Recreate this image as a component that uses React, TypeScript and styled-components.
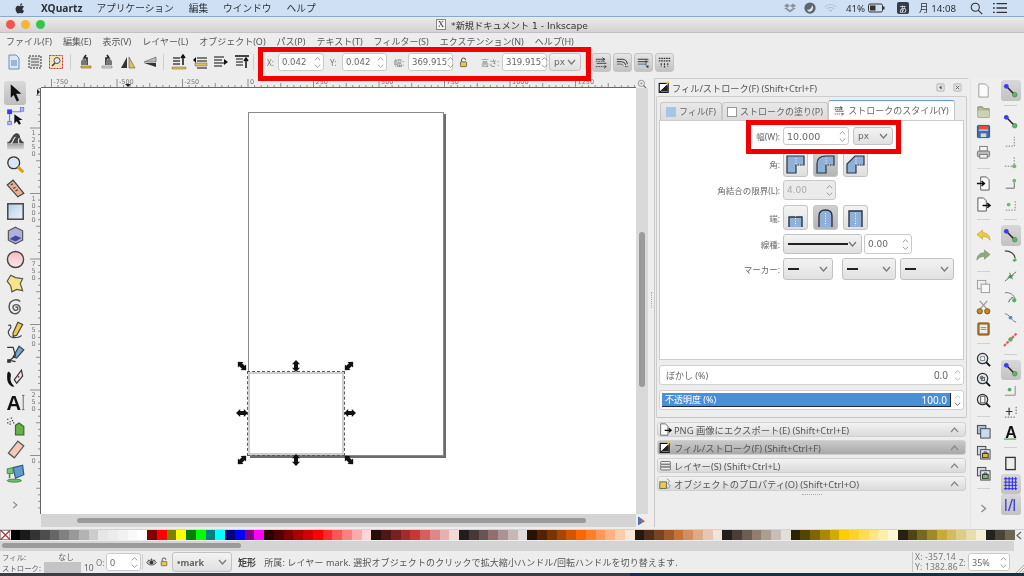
import React from "react";
import styled, { createGlobalStyle } from "styled-components";

const GlobalStyle = createGlobalStyle`
  html, body { margin: 0; padding: 0; background: #ededed; overflow: hidden; }
  * { box-sizing: border-box; }
`;

const sans = `"DejaVu Sans", "Noto Sans CJK JP", sans-serif`;
const cjk = `"Noto Sans", "Noto Sans CJK JP", sans-serif`;

/* ---------- icons ---------- */
const Ico = styled.svg<{ $s?: number }>`
  width: ${(p) => p.$s ?? 16}px;
  height: ${(p) => p.$s ?? 16}px;
  flex: none;
  display: block;
  overflow: visible;
`;

const glyphs: Record<string, React.ReactNode> = {
  newDoc: <path d="M3 1h7l3 3v11H3z" fill="#fbfbfb" stroke="#9a9a9a" />,
  newDocBlue: (
    <>
      <path d="M3 1h7l3 3v11H3z" fill="#dbe6f4" stroke="#6d8db5" />
      <path d="M5 7h6M5 9h6M5 11h6" stroke="#5c84b8" />
    </>
  ),
  selAll: (
    <>
      <rect x="2" y="2" width="12" height="12" fill="#ddd" stroke="#333" strokeDasharray="2 1" />
      <path d="M4 5h8M4 8h8M4 11h8" stroke="#555" />
    </>
  ),
  selTouch: (
    <>
      <rect x="1.5" y="1.5" width="13" height="13" fill="#f7e3b0" stroke="#c33" strokeDasharray="2 1" />
      <circle cx="9" cy="6.5" r="3" fill="#dce9f6" stroke="#555" />
      <path d="M4 12l3-3" stroke="#444" strokeWidth="1.6" />
    </>
  ),
  rotL: (
    <>
      <path d="M3 12h10v2H3z" fill="#e5b93a" stroke="#7b6320" strokeWidth=".6" />
      <path d="M9 11V4H6L8 1" fill="none" stroke="#222" strokeWidth="1.6" />
      <path d="M3 7l3-3 3 3v4H3z" fill="#777" />
    </>
  ),
  rotR: (
    <>
      <path d="M3 12h10v2H3z" fill="#d7dbe0" stroke="#777" strokeWidth=".6" />
      <path d="M7 11V4h3L8 1" fill="none" stroke="#222" strokeWidth="1.6" />
      <path d="M13 7l-3-3-3 3v4h6z" fill="#777" />
    </>
  ),
  flipH: (
    <>
      <path d="M7 3v11H1z" fill="#333" />
      <path d="M9 3v11h6z" fill="#e2bf5b" stroke="#555" strokeWidth=".6" />
    </>
  ),
  flipV: (
    <>
      <path d="M15 3v5H3z" fill="#b9b9b9" stroke="#555" strokeWidth=".6" />
      <path d="M15 13V9H3z" fill="#333" />
    </>
  ),
  top: (
    <>
      <path d="M1 13h14v2H1z" fill="#e2bf5b" stroke="#7b6320" strokeWidth=".5" />
      <path d="M2 10h7M2 7h7M2 4h7" stroke="#444" strokeWidth="1.4" />
      <path d="M12 11V2M10 4l2-3 2 3" fill="none" stroke="#111" strokeWidth="1.5" />
    </>
  ),
  raise: (
    <>
      <path d="M3 9h12v3H3z" fill="#e2bf5b" stroke="#7b6320" strokeWidth=".5" />
      <path d="M5 4h10M5 7h10M5 14h10" stroke="#555" strokeWidth="1.3" />
      <path d="M1 6l3-3v6z" fill="#111" />
    </>
  ),
  lower: (
    <>
      <path d="M1 3h10M1 6h8M1 9h10M1 12h8" stroke="#555" strokeWidth="1.3" />
      <path d="M15 8l-4-3v6z" fill="#111" />
    </>
  ),
  bottom: (
    <>
      <path d="M1 2h14" stroke="#333" strokeWidth="1.8" />
      <path d="M2 5h7M2 8h7M2 11h7" stroke="#555" strokeWidth="1.3" />
      <path d="M12 14V5M10 7l2-3 2 3" fill="none" stroke="#111" strokeWidth="1.5" />
    </>
  ),
  lock: (
    <>
      <path d="M5 7V4.5a3 3 0 016 0" fill="none" stroke="#444" strokeWidth="1.4" />
      <rect x="3.5" y="7" width="9" height="7" rx="1" fill="#e9c64f" stroke="#444" />
    </>
  ),
  eye: (
    <>
      <path d="M1 8c3-5 11-5 14 0-3 5-11 5-14 0z" fill="#bbb" stroke="#333" />
      <circle cx="8" cy="8" r="2.6" fill="#333" />
      <path d="M3 4l1 2M8 2v3M13 4l-1 2" stroke="#333" />
    </>
  ),
  strokeA: (
    <>
      <path d="M1 4h11M9 2l3 2-3 2" fill="none" stroke="#333" strokeWidth="1.1" />
      <path d="M2 9h12M11 12l3 1-3 2" fill="none" stroke="#333" strokeWidth="1.1" />
      <path d="M1 6.5h12M1 13h10" stroke="#333" strokeDasharray="2 1" />
    </>
  ),
  strokeB: (
    <>
      <path d="M1 4h7q5 0 6 6M1 7h6q4 0 5 4" fill="none" stroke="#333" strokeWidth="1.2" />
      <path d="M1 10h5q2 0 3 2" fill="none" stroke="#555" />
      <path d="M11 13h4" stroke="#333" strokeDasharray="2 1" />
    </>
  ),
  strokeC: (
    <>
      <path d="M1 4h13M1 7h13" stroke="#333" strokeWidth="1.2" />
      <path d="M1 10h9" stroke="#4c78a8" strokeWidth="1.3" />
      <path d="M11 13l3-2v4z" fill="#333" />
      <path d="M11 5v7" stroke="#333" />
    </>
  ),
  strokeD: (
    <>
      <path d="M1 3h14M1 6h14" stroke="#333" strokeWidth="1.4" strokeDasharray="2 1" />
      <path d="M4 9v4M8 9v5M12 9v4" stroke="#333" strokeWidth="1.4" strokeDasharray="2 1" />
    </>
  ),
  selector: <path d="M4 1l9 8H8.5l2.5 5.5-2 1-2.5-5.5L4 12.5z" fill="#111" />,
  node: (
    <>
      <path d="M3 4h10M3 4v9" stroke="#7d7df0" fill="none" />
      <rect x="1" y="2" width="4" height="4" fill="#3b3bf0" />
      <rect x="12" y="0.5" width="3" height="3" fill="#b7b7f5" stroke="#55f" strokeWidth=".5" />
      <rect x="1.5" y="12" width="3" height="3" fill="#b7b7f5" stroke="#55f" strokeWidth=".5" />
      <path d="M7 6l7 5h-3l1.5 3-1.5 1-2-3-2 2z" fill="#111" />
    </>
  ),
  tweak: (
    <>
      <defs>
        <linearGradient id="tweakBase" x1="0" y1="0" x2="0" y2="1">
          <stop offset="0" stopColor="#8c8c8c" />
          <stop offset="1" stopColor="#d8d8d8" />
        </linearGradient>
      </defs>
      <rect x="1" y="9" width="14" height="6.5" fill="url(#tweakBase)" />
      <path d="M1 10C4 9 5 3 8 2c3-1 4 2 4 4 1 2 2 3 3 4z" fill="#444" />
      <path d="M8 5c-2 1-2 5-4 6M11 6c-1 2-1 3 0 5" stroke="#ddd" fill="none" />
    </>
  ),
  zoom: (
    <>
      <circle cx="6.5" cy="6.5" r="5" fill="#d8e8f7" stroke="#333" strokeWidth="1.1" />
      <path d="M10 10l4.5 4.5" stroke="#e59a1c" strokeWidth="2.6" />
    </>
  ),
  measure: (
    <>
      <path d="M1 5l5-4 9 11-5 3z" fill="#e9b09a" stroke="#444" />
      <path d="M4 5l2-1M6 8l2-1M8 10l2-1" stroke="#444" />
    </>
  ),
  rect: (
    <>
      <defs>
        <linearGradient id="rectFill" x1="0" y1="0" x2="1" y2="1">
          <stop offset="0" stopColor="#b3cde6" />
          <stop offset="1" stopColor="#eef4fa" />
        </linearGradient>
      </defs>
      <rect x="1.5" y="1.5" width="13" height="13" fill="url(#rectFill)" stroke="#4a4a4a" strokeWidth="1.3" />
    </>
  ),
  box3d: (
    <>
      <path d="M8 1l6 3v8l-6 3-6-3V4z" fill="#aeb0de" stroke="#555" />
      <path d="M3 11l5-3 5 2-5 3z" fill="#46469a" />
    </>
  ),
  ellipse: (
    <>
      <defs>
        <linearGradient id="ellFill" x1="0" y1="0" x2="0" y2="1">
          <stop offset="0" stopColor="#fbb9c4" />
          <stop offset="1" stopColor="#fde6ea" />
        </linearGradient>
      </defs>
      <circle cx="8" cy="8" r="6.8" fill="url(#ellFill)" stroke="#444" strokeWidth="1.2" />
    </>
  ),
  star: <path d="M4 1l4 2 6 1-2 4 2 6-5-1-4 2-1-5-3-4z" fill="#f5e58a" stroke="#555" />,
  spiral: (
    <path
      d="M8 8c1-1 2 0 2 1s-2 2-3 1-2-3 0-4 5 0 5 3-3 5-6 4-4-5-3-8 6-5 9-2"
      fill="none"
      stroke="#555"
      strokeWidth="1.2"
    />
  ),
  pencil: (
    <>
      <path d="M10 1l4 2-5 9-3 1 0-3z" fill="#f3c94e" stroke="#444" />
      <path d="M2 4c2-2 3 1 1 3s-1 7 4 7 6-2 6-2" fill="none" stroke="#444" />
    </>
  ),
  pen: (
    <>
      <path d="M11 1l4 3-6 7-3-1z" fill="#72a7d6" stroke="#444" />
      <path d="M1 2h5l2 7-5 4 5 1" fill="none" stroke="#333" />
      <rect x="1" y="12" width="3" height="3" fill="#333" />
    </>
  ),
  callig: (
    <>
      <path d="M2 2c4 2 1 5 2 8s3 4 3 5c-3 0-6-3-6-7s0-5 1-6z" fill="#111" />
      <path d="M13 1l1 5-5 6-2-3z" fill="#e7e7f5" stroke="#333" />
      <path d="M10 6l1 1" stroke="#c33" strokeWidth="1.4" />
    </>
  ),
  text: (
    <>
      <text x="6.5" y="14" textAnchor="middle" fontFamily="Liberation Sans" fontWeight="700" fontSize="17" fill="#111">
        A
      </text>
      <path d="M14.5 2v12M13.5 2h2M13.5 14h2" stroke="#555" strokeWidth=".7" fill="none" />
    </>
  ),
  spray: (
    <>
      <path d="M8 7l3-2 4 3v7H8z" fill="#69b04c" stroke="#3d6a2b" />
      <path d="M1 2h1M3 4h1M1 5h1M4 1h1M5 3h1M3 6h1M6 5h1" stroke="#333" />
    </>
  ),
  eraser: <path d="M10 1l5 4-8 10-5-4z" fill="#f6c9bb" stroke="#555" />,
  bucket: (
    <>
      <path d="M6 3l8-2 1 8-7 3z" fill="#5f9bd0" stroke="#2f5a80" />
      <path d="M1 4l5-1v5H1z" fill="#79c27a" stroke="#2d6d33" strokeWidth=".6" />
      <path d="M3 8v4" stroke="#3d9c49" strokeWidth="1.4" />
      <ellipse cx="7" cy="14" rx="6" ry="1.3" fill="#74bb72" stroke="#2d6d33" strokeWidth=".6" />
    </>
  ),
  open: (
    <>
      <path d="M2 3h5l1 2h6v9H2z" fill="#b4b998" stroke="#888c70" />
      <path d="M2 7h12v7H2z" fill="#ccd0b4" />
    </>
  ),
  save: (
    <>
      <rect x="1.5" y="1.5" width="13" height="13" rx="1" fill="#3f6ba8" stroke="#2a4d80" />
      <rect x="3" y="2" width="10" height="4" fill="#e84a3b" />
      <rect x="3" y="6" width="10" height="1" fill="#fff" />
      <rect x="5" y="10" width="6" height="4" fill="#cfd6df" />
    </>
  ),
  print: (
    <>
      <rect x="4" y="1.5" width="8" height="5" fill="#f2f2f2" stroke="#777" />
      <rect x="1.5" y="6.5" width="13" height="6" rx="1" fill="#bcbcbc" stroke="#777" />
      <rect x="4" y="10" width="8" height="4" fill="#eee" stroke="#777" />
    </>
  ),
  importDoc: (
    <>
      <path d="M5 1h6l3 3v11H5z" fill="#fafafa" stroke="#555" />
      <path d="M1 8h7M6 5.5L9 8l-3 2.5" fill="none" stroke="#111" strokeWidth="1.5" />
    </>
  ),
  exportDoc: (
    <>
      <path d="M2 1h6l3 3v11H2z" fill="#fafafa" stroke="#555" />
      <path d="M7 9h7M12 6.5L15 9l-3 2.5" fill="none" stroke="#111" strokeWidth="1.5" />
    </>
  ),
  undo: <path d="M1 7l6-5v3c5 0 8 3 8 8-2-3-4-4-8-4v3z" fill="#eccc3f" stroke="#b99a1e" strokeWidth=".6" />,
  redo: <path d="M15 7L9 2v3c-5 0-8 3-8 8 2-3 4-4 8-4v3z" fill="#8ea97a" stroke="#728c60" strokeWidth=".6" />,
  copy: (
    <>
      <rect x="1.5" y="1.5" width="9" height="9" fill="#eee" stroke="#999" />
      <rect x="5.5" y="5.5" width="9" height="9" fill="#f6f6f6" stroke="#999" />
    </>
  ),
  cut: (
    <>
      <path d="M4 1l8 9M12 1L4 10" stroke="#999" strokeWidth="1.3" />
      <circle cx="4" cy="12" r="2.8" fill="#c98a2a" stroke="#7a5010" />
      <circle cx="12" cy="12" r="2.8" fill="#c98a2a" stroke="#7a5010" />
    </>
  ),
  paste: (
    <>
      <rect x="2" y="2" width="12" height="13" rx="1" fill="#b07c35" stroke="#7a5010" />
      <rect x="4" y="4" width="8" height="9" fill="#eee" />
      <path d="M5 7h6M5 9h6" stroke="#888" />
    </>
  ),
  zoomA: (
    <>
      <circle cx="7" cy="7" r="5.5" fill="#dbe7f2" stroke="#333" strokeWidth="1.3" />
      <path d="M11 11l4 4" stroke="#111" strokeWidth="2" />
      <rect x="5" y="5" width="4" height="4" fill="#fff" stroke="#888" />
    </>
  ),
  zoomB: (
    <>
      <circle cx="7" cy="7" r="5.5" fill="#dbe7f2" stroke="#333" strokeWidth="1.3" />
      <path d="M11 11l4 4" stroke="#111" strokeWidth="2" />
      <circle cx="6" cy="6" r="1.5" fill="#eecb4e" stroke="#555" />
      <rect x="6" y="6" width="3" height="3" fill="none" stroke="#555" />
    </>
  ),
  zoomC: (
    <>
      <circle cx="7" cy="7" r="5.5" fill="#dbe7f2" stroke="#333" strokeWidth="1.3" />
      <path d="M11 11l4 4" stroke="#111" strokeWidth="2" />
      <rect x="5" y="3.5" width="4.5" height="7" fill="#fff" stroke="#555" />
    </>
  ),
  dup: (
    <>
      <rect x="1.5" y="1.5" width="9" height="9" fill="#a9bfd7" stroke="#444" />
      <rect x="5" y="5" width="10" height="10" fill="#c9dbee" stroke="#444" />
    </>
  ),
  cloneLock: (
    <>
      <rect x="1.5" y="1.5" width="9" height="9" fill="#cfd6df" stroke="#444" />
      <rect x="5" y="5" width="10" height="10" fill="#e4e8ee" stroke="#444" />
      <rect x="7" y="9" width="6" height="4.5" fill="#e5b93a" stroke="#333" />
      <path d="M8.5 9V7.5h3V9" fill="none" stroke="#333" />
    </>
  ),
  cloneGreen: (
    <>
      <rect x="1.5" y="1.5" width="9" height="9" fill="#cfd6df" stroke="#444" />
      <rect x="5" y="5" width="10" height="10" fill="#e4e8ee" stroke="#444" />
      <rect x="7" y="9" width="6" height="4.5" fill="#7fbd57" stroke="#333" />
      <path d="M8.5 9V7.5h3V9" fill="none" stroke="#333" />
    </>
  ),
  snapMain: (
    <>
      <path d="M3 3l10 10" stroke="#222" strokeWidth="1.6" />
      <rect x="1" y="1" width="5" height="5" rx="2.5" fill="#3b3bf0" />
      <rect x="10" y="10" width="5" height="5" rx="2.5" fill="#63b36b" stroke="#2d6d33" strokeWidth=".5" />
    </>
  ),
  snapBox1: <path d="M3 13h9V3" fill="none" stroke="#777" strokeDasharray="1.5 1.5" />,
  snapBox2: (
    <>
      <path d="M2 12h10V2" fill="none" stroke="#777" strokeDasharray="1.5 1.5" />
      <circle cx="12" cy="12" r="2.2" fill="#74b57c" />
    </>
  ),
  snapBox3: (
    <>
      <path d="M3 13h9V7" fill="none" stroke="#666" />
      <circle cx="12" cy="5" r="2" fill="#74b57c" />
    </>
  ),
  snapBox4: (
    <>
      <path d="M3 14h10V3" fill="none" stroke="#777" strokeDasharray="1.5 1.5" />
      <circle cx="6" cy="8" r="2" fill="#74b57c" />
    </>
  ),
  curveA: (
    <>
      <path d="M2 3c6 0 10 3 11 8" fill="none" stroke="#444" strokeWidth="1.2" />
      <path d="M10 13l3-2 2 2-3 2z" fill="#4fb25c" />
    </>
  ),
  curveB: (
    <>
      <path d="M2 13L14 3" stroke="#666" />
      <path d="M5 9l6-2M7 4l3 7" stroke="#666" />
      <circle cx="8" cy="8" r="2" fill="#4b9a54" />
    </>
  ),
  curveC: (
    <>
      <path d="M2 3c5-1 10 2 11 7" fill="none" stroke="#777" />
      <path d="M6 13c1-3 3-5 5-5" fill="none" stroke="#444" />
      <circle cx="12" cy="11" r="2.2" fill="#4fb25c" />
    </>
  ),
  curveD: (
    <>
      <path d="M2 3c5 0 6 7 12 9" fill="none" stroke="#777" />
      <circle cx="8" cy="7" r="2" fill="#558fc0" />
    </>
  ),
  curveE: (
    <>
      <path d="M1 15L15 1" stroke="#e06060" strokeWidth="2.4" strokeDasharray="3 1" />
      <circle cx="8" cy="8" r="2.3" fill="#4fb25c" />
    </>
  ),
  snapCenter: (
    <>
      <path d="M2 13h11V3" fill="none" stroke="#888" />
      <circle cx="7" cy="7" r="2" fill="#5fa968" />
    </>
  ),
  snapPlus: (
    <>
      <path d="M2 14h12M14 3v9" fill="none" stroke="#555" strokeDasharray="1.5 1.5" />
      <path d="M3 8h7M6.5 4v8" stroke="#333" strokeWidth="1.2" />
    </>
  ),
  snapText: (
    <>
      <text x="8.5" y="14" textAnchor="middle" fontFamily="Liberation Sans" fontWeight="700" fontSize="17" fill="#111">
        A
      </text>
      <path d="M1 15h13" stroke="#4fb25c" strokeWidth="1.4" />
    </>
  ),
  snapPage: <rect x="3" y="1.5" width="10" height="13" fill="#eee" stroke="#333" strokeWidth="1.4" />,
  grid: (
    <path
      d="M1 3h14M1 6.5h14M1 10h14M1 13.5h14M3 1v14M6.5 1v14M10 1v14M13.5 1v14"
      stroke="#2323ee"
      fill="none"
    />
  ),
  guide: <path d="M3 2v13M12 2v13M6 15L10 2" stroke="#4141dd" strokeWidth="1.5" fill="none" />,
  chevronR: <path d="M5 3l6 5-6 5" fill="none" stroke="#888" strokeWidth="1.8" />,
  fillStroke: (
    <>
      <rect x="1.5" y="3" width="11" height="11" fill="#fff" stroke="#111" strokeWidth="1.4" />
      <path d="M2 14L13 3v0L2 14z" stroke="#111" />
      <path d="M2 13l10-9v9z" fill="#222" />
      <path d="M10 1l4 0-3 5z" fill="#f0c832" />
    </>
  ),
  layers: (
    <>
      <rect x="2" y="3" width="12" height="3.5" rx="1" fill="#eee" stroke="#555" />
      <rect x="2" y="6.5" width="12" height="3.5" rx="1" fill="#ddd" stroke="#555" />
      <rect x="2" y="10" width="12" height="3.5" rx="1" fill="#eee" stroke="#555" />
    </>
  ),
  objProps: (
    <>
      <rect x="1" y="6" width="8" height="8" fill="#efc94a" stroke="#555" />
      <path d="M10 2l3 3-2 3 3 3-3 3-2-2" fill="none" stroke="#444" strokeDasharray="2 1" />
    </>
  ),
  zoomPage: (
    <>
      <circle cx="7" cy="7" r="5" fill="#e8eef4" stroke="#666" />
      <path d="M10.5 10.5l4 4" stroke="#666" strokeWidth="1.8" />
      <path d="M5 7h4M7 5v4" stroke="#888" />
    </>
  ),
  wheel: (
    <>
      <path d="M3 2l10 7-10 6z" fill="#6fa94e" />
      <path d="M3 2l5 3.5V12l-5 3z" fill="#4e6fbf" />
      <path d="M8 5.5l5 3.5-5 3z" fill="#d45f4b" />
    </>
  ),
  panelLeft: (
    <>
      <rect x="1.5" y="1.5" width="13" height="13" rx="1.5" fill="#e3e3e3" stroke="#999" />
      <path d="M10 4.5v7L5.5 8z" fill="#555" />
    </>
  ),
  panelClose: (
    <>
      <rect x="1.5" y="1.5" width="13" height="13" rx="1.5" fill="#e3e3e3" stroke="#999" />
      <path d="M5 5l6 6M11 5l-6 6" stroke="#555" strokeWidth="1.5" />
    </>
  ),
};

const Icon = ({ n, s }: { n: string; s?: number }) => (
  <Ico $s={s} viewBox="0 0 16 16">
    {glyphs[n]}
  </Ico>
);

const Chevron = ({ up, c = "#777", small }: { up?: boolean; c?: string; small?: boolean }) => (
  <svg width={small ? 7 : 9} height={small ? 4 : 6} viewBox="0 0 9 6" preserveAspectRatio="none">
    <path d={up ? "M1 5l3.5-4L8 5" : "M1 1l3.5 4L8 1"} fill="none" stroke={c} strokeWidth="1.2" />
  </svg>
);

/* ---------- mac chrome ---------- */
const Root = styled.div`
  position: relative;
  width: 1024px;
  height: 576px;
  overflow: hidden;
  display: flex;
  flex-direction: column;
  background: #ededed;
  font-family: ${sans};
  font-size: 9px;
  color: #555;
  filter: blur(0.45px);
`;

const MacBar = styled.div`
  height: 17px;
  flex: none;
  display: flex;
  align-items: center;
  padding: 0 17px 0 15px;
  background: #cfe0f5;
  border-bottom: 1px solid #86a9d0;
  color: #2c3238;
  font-family: ${cjk};
  font-size: 9.7px;
`;

const MacItem = styled.span<{ $bold?: boolean; $ml: number }>`
  margin-left: ${(p) => p.$ml}px;
  font-weight: ${(p) => (p.$bold ? 700 : 400)};
  font-size: ${(p) => (p.$bold ? "10.2px" : "inherit")};
  white-space: nowrap;
`;

const MacRight = styled.div`
  margin-left: auto;
  display: flex;
  align-items: center;
`;

const ImeBox = styled.span`
  width: 12px;
  height: 12px;
  margin-left: 12px;
  background: #333c48;
  color: #fff;
  font-size: 8px;
  border-radius: 2px;
  display: flex;
  align-items: center;
  justify-content: center;
`;

const TitleBar = styled.div`
  position: relative;
  height: 16px;
  flex: none;
  display: flex;
  align-items: center;
  justify-content: center;
  gap: 5px;
  background: linear-gradient(#ebebeb, #d3d3d3);
  border-bottom: 1px solid #c2c2c2;
  border-radius: 4px 4px 0 0;
  color: #333;
  font-size: 9.2px;
`;

const Lights = styled.div`
  position: absolute;
  left: 6px;
  top: 3px;
  display: flex;
  gap: 6px;
`;

const Light = styled.span<{ $c: string }>`
  width: 9px;
  height: 9px;
  border-radius: 50%;
  background: ${(p) => p.$c};
`;

const XBadge = styled.span`
  width: 10px;
  height: 11px;
  background: #f4f4f4;
  border: 1px solid #888;
  color: #333;
  font-family: "Liberation Serif", serif;
  font-size: 9px;
  line-height: 9px;
  text-align: center;
`;

const MenuRow = styled.div`
  height: 17px;
  flex: none;
  display: flex;
  align-items: center;
  gap: 11px;
  padding-left: 6px;
  font-family: ${cjk};
  font-size: 9px;
  color: #585858;
`;

/* ---------- command toolbar ---------- */
const ToolRow = styled.div`
  height: 28px;
  flex: none;
  display: flex;
  align-items: center;
  padding: 0 0 4px 3px;
`;

const TBtn = styled.span<{ $w?: number }>`
  width: ${(p) => p.$w ?? 21}px;
  height: 18px;
  flex: none;
  display: flex;
  align-items: center;
  justify-content: center;
`;

const VSep = styled.span<{ $mx?: number }>`
  width: 1px;
  height: 16px;
  flex: none;
  margin: 0 ${(p) => p.$mx ?? 4}px;
  background: #cfcfcf;
`;

const FieldLabel = styled.span<{ $w: number; $ml?: number }>`
  width: ${(p) => p.$w}px;
  margin-left: ${(p) => p.$ml ?? 0}px;
  flex: none;
  font-family: ${cjk};
  font-size: 8px;
  color: #777;
  white-space: nowrap;
`;

const Spin = styled.div<{ $w: number; $h?: number; $off?: boolean; $fs?: number }>`
  width: ${(p) => p.$w}px;
  height: ${(p) => p.$h ?? 18}px;
  flex: none;
  display: flex;
  align-items: center;
  justify-content: space-between;
  padding: 0 2px 0 3px;
  background: ${(p) => (p.$off ? "#ebebeb" : "#fff")};
  border: 1px solid #c9c9c9;
  border-radius: 3px;
  color: ${(p) => (p.$off ? "#aaa" : "#666")};
  font-size: ${(p) => p.$fs ?? 8.5}px;
`;

const SpinArrows = styled.span`
  display: flex;
  flex-direction: column;
  gap: 3px;
`;

const SpinBox = ({
  v,
  w,
  h,
  off,
  fs,
}: {
  v: string;
  w: number;
  h?: number;
  off?: boolean;
  fs?: number;
}) => (
  <Spin $w={w} $h={h} $off={off} $fs={fs}>
    {v}
    <SpinArrows>
      <Chevron up small c="#8c8c8c" />
      <Chevron small c="#8c8c8c" />
    </SpinArrows>
  </Spin>
);

const Select = styled.div<{ $w: number; $h?: number; $bold?: boolean; $ml?: number; $mr?: number }>`
  width: ${(p) => p.$w}px;
  height: ${(p) => p.$h ?? 18}px;
  margin-left: ${(p) => p.$ml ?? 0}px;
  margin-right: ${(p) => p.$mr ?? 0}px;
  flex: none;
  display: flex;
  align-items: center;
  justify-content: space-between;
  padding: 0 4px;
  background: linear-gradient(#f3f3f3, #e0e0e0);
  border: 1px solid #c2c2c2;
  border-radius: 3px;
  color: #666;
  font-size: 9px;
  font-weight: ${(p) => (p.$bold ? 700 : 400)};
`;

const SnapBtn = styled.span<{ $ml?: number }>`
  width: 19px;
  height: 19px;
  margin-left: ${(p) => p.$ml ?? 0}px;
  margin-right: 2px;
  flex: none;
  display: flex;
  align-items: center;
  justify-content: center;
  background: linear-gradient(#e6e6e6, #c2c2c2);
  border: 1px solid #c4c4c4;
  border-radius: 3px;
`;

/* ---------- left tools ---------- */
const Main = styled.div`
  height: 451px;
  flex: none;
  display: flex;
`;

const LeftTools = styled.div`
  width: 30px;
  flex: none;
  display: flex;
  flex-direction: column;
  align-items: center;
  padding: 3px 4px 0 4px;
`;

const LeftTool = styled.span<{ $active?: boolean; $mt?: number }>`
  width: 22px;
  height: 23.8px;
  margin-top: ${(p) => p.$mt ?? 0}px;
  flex: none;
  display: flex;
  align-items: center;
  justify-content: center;
  border-radius: 3px;
  background: ${(p) => (p.$active ? "linear-gradient(#dadada, #bdbdbd)" : "none")};
`;

/* ---------- canvas ---------- */
const CanvasGrid = styled.div`
  width: 618px;
  flex: none;
  display: grid;
  grid-template-columns: 11px 595px 12px;
  grid-template-rows: 10px 426px 15px;
`;

const RulerSvg = styled.svg`
  display: block;
`;

const Corner = styled.div``;

const ZoomCorner = styled.div`
  display: flex;
  justify-content: center;
  padding-top: 1px;
`;

const Canvas = styled.div`
  position: relative;
  background: #fff;
  overflow: hidden;
`;

const Page = styled.div`
  position: absolute;
  left: 207px;
  top: 24px;
  width: 196px;
  height: 344px;
  background: #fff;
  border: 1px solid #8a8a8a;
  box-shadow: 2px 2px 0 #6c6c6c;
`;

const Selected = styled.div`
  position: absolute;
  left: 207px;
  top: 284px;
  width: 96px;
  height: 83px;
  background: #fff;
  border: 2px solid #cfcfcf;
  outline: 1px dashed #5a5a5a;
`;

const Handle = styled.svg<{ $x: number; $y: number; $r: number }>`
  position: absolute;
  left: ${(p) => p.$x - 6}px;
  top: ${(p) => p.$y - 6}px;
  width: 12px;
  height: 12px;
  transform: rotate(${(p) => p.$r}deg);
`;

const VScroll = styled.div`
  background: #d9d9d9;
  padding: 144px 3px 0;
`;

const VThumb = styled.div`
  height: 155px;
  border-radius: 3px;
  background: #9b9b9b;
`;

const HScroll = styled.div`
  grid-column: 1 / span 1;
`;

const HTrack = styled.div`
  margin-top: 0;
  height: 13px;
  background: #d4d4d4;
  padding: 4px 50px 0 36px;
`;

const HThumb = styled.div`
  height: 5px;
  border-radius: 3px;
  background: #9b9b9b;
`;

const WheelBox = styled.div`
  padding: 1px 0 0 0;
`;

/* ---------- dock ---------- */
const Dock = styled.div`
  width: 322px;
  flex: none;
  padding: 0 2px 0 6px;
  height: 449px;
  position: relative;
`;

const Grip = styled.span`
  position: absolute;
  left: 3px;
  top: 214px;
  width: 1px;
  height: 16px;
  border-left: 1px dotted #aaa;
`;

const DockInner = styled.div`
  height: 100%;
  border-left: 1px solid #c9c9c9;
  border-top: 1px solid #cfcfcf;
  padding-left: 1px;
`;

const DockTitle = styled.div`
  height: 17px;
  display: flex;
  align-items: center;
  gap: 1px;
  padding: 0 6px 0 2px;
  color: #555;
  font-family: ${cjk};
  font-size: 9.2px;
`;

const DockTools = styled.span`
  margin-left: auto;
  display: flex;
  gap: 8px;
`;

const Frame = styled.div`
  width: 311px;
  height: 322px;
  border: 1px solid #cdcdcd;
  border-bottom-color: #c4c4c4;
  padding: 3px 2px 0;
  border-radius: 2px;
`;

const Tabs = styled.div`
  height: 20px;
  display: flex;
  align-items: flex-end;
  padding-left: 1px;
`;

const Tab = styled.div<{ $active?: boolean; $w: number }>`
  width: ${(p) => p.$w}px;
  height: ${(p) => (p.$active ? 20 : 18)}px;
  flex: none;
  display: flex;
  align-items: center;
  justify-content: center;
  gap: 3px;
  font-family: ${cjk};
  font-size: 9px;
  color: #666;
  background: ${(p) => (p.$active ? "#fff" : "linear-gradient(#e8e8e8, #dcdcdc)")};
  border: 1px solid #c8c8c8;
  border-bottom: none;
  border-top: ${(p) => (p.$active ? "1.5px solid #5b9ae0" : "1px solid #c8c8c8")};
  border-radius: 3px 3px 0 0;
`;

const TabPage = styled.div`
  height: 240px;
  background: #fff;
  border: 1px solid #cbcbcb;
  padding-top: 6px;
`;

const FormRow = styled.div<{ $mt: number; $h: number }>`
  height: ${(p) => p.$h}px;
  margin-top: ${(p) => p.$mt}px;
  display: flex;
  align-items: center;
`;

const FormLabel = styled.span`
  width: 123px;
  flex: none;
  padding-right: 3px;
  text-align: right;
  font-family: ${cjk};
  font-size: 8.5px;
  color: #666;
`;

const Field = styled.div<{ $gap?: number }>`
  display: flex;
  align-items: center;
  gap: ${(p) => p.$gap ?? 5}px;
`;

const IconToggle = styled.span<{ $on?: boolean }>`
  width: 25px;
  height: 25px;
  flex: none;
  display: flex;
  align-items: center;
  justify-content: center;
  background: ${(p) =>
    p.$on ? "linear-gradient(#cfcfcf, #b5b5b5)" : "linear-gradient(#f3f3f3, #dfdfdf)"};
  border: 1px solid #c4c4c4;
  border-radius: 3px;
`;

const LinePick = styled.span<{ $w: number }>`
  width: ${(p) => p.$w}px;
  height: 1.5px;
  background: #222;
`;

const ValueRow = styled.div<{ $mt: number; $h: number }>`
  height: ${(p) => p.$h}px;
  margin-top: ${(p) => p.$mt}px;
  display: flex;
  align-items: center;
  justify-content: space-between;
  background: #fff;
  border: 1px solid #d0d0d0;
  border-radius: 3px;
  padding: 2px;
  font-family: ${cjk};
  font-size: 9px;
  color: #666;
`;

const ValueBar = styled.div<{ $full?: boolean }>`
  flex: 1;
  height: 100%;
  display: flex;
  align-items: center;
  justify-content: space-between;
  padding: 0 3px 0 ${(p) => (p.$full ? 3 : 4)}px;
  margin-right: 3px;
  background: ${(p) => (p.$full ? "#4a90d9" : "#fff")};
  border-bottom: ${(p) => (p.$full ? "1px solid #1d2b44" : "none")};
  border-right: ${(p) => (p.$full ? "1px solid #1d2b44" : "none")};
  color: ${(p) => (p.$full ? "#fff" : "#666")};
`;

const ValueNum = styled.span`
  font-size: 10px;
`;

const Expanders = styled.div`
  width: 309px;
  margin: 4px 0 0 1px;
  display: flex;
  flex-direction: column;
  gap: 3px;
`;

const Expander = styled.div<{ $active?: boolean }>`
  height: 15px;
  display: flex;
  align-items: center;
  gap: 2px;
  padding: 0 6px 0 1px;
  background: ${(p) =>
    p.$active ? "linear-gradient(#c9c9c9, #a9a9a9)" : "linear-gradient(#f3f3f3, #dadada)"};
  border: 1px solid #d0d0d0;
  border-radius: 3px;
  font-family: ${cjk};
  font-size: 9.3px;
  color: #555;
  & > svg:last-child {
    margin-left: auto;
  }
`;

const Dots = styled.div`
  width: 20px;
  margin: 3px auto 0;
  border-top: 1px dotted #aaa;
`;

/* ---------- right strips ---------- */
const Strips = styled.div`
  flex: 1;
  display: flex;
  background: #efefef;
  border-left: 1px solid #e6e6e6;
  padding-top: 2px;
`;

const Strip = styled.div<{ $w: number }>`
  width: ${(p) => p.$w}px;
  flex: none;
  display: flex;
  flex-direction: column;
  align-items: center;
`;

const StripBtn = styled.span<{ $on?: boolean; $mt?: number }>`
  width: 20px;
  height: 20.8px;
  margin-top: ${(p) => p.$mt ?? 0}px;
  flex: none;
  display: flex;
  align-items: center;
  justify-content: center;
  border-radius: 3px;
  background: ${(p) => (p.$on ? "linear-gradient(#d8d8d8, #c2c2c2)" : "none")};
`;

const StripSep = styled.span`
  width: 13px;
  height: 1px;
  margin: 4.5px 0;
  flex: none;
  background: #cfcfcf;
`;

/* ---------- palette + status ---------- */
const PaletteRow = styled.div`
  height: 12px;
  flex: none;
  display: flex;
  align-items: stretch;
  border-top: 1px solid #d2d2d2;
  padding-bottom: 1px;
`;

const NoPaint = styled.svg`
  width: 10.6px;
  height: 10px;
  flex: none;
  background: #fff;
`;

const Swatch = styled.span`
  width: 9.75px;
  flex: none;
`;

const PaletteEnd = styled.div`
  flex: 1;
  display: flex;
  align-items: center;
  justify-content: center;
`;

const PaletteScroll = styled.div`
  height: 10px;
  flex: none;
  width: 1014px;
  background: #d4d4d4;
  padding: 2px 0 0 2px;
`;

const PaletteThumb = styled.div`
  width: 239px;
  height: 5px;
  border-radius: 3px;
  background: #9b9b9b;
`;

const Status = styled.div`
  position: relative;
  height: 22px;
  flex: none;
  display: flex;
  align-items: center;
  font-family: ${cjk};
  font-size: 8px;
  color: #666;
`;

const FillStroke = styled.div`
  width: 96px;
  flex: none;
  display: grid;
  grid-template-columns: 42px 37px 15px;
  grid-template-rows: 11px 11px;
  padding-left: 2px;
  align-items: center;
  white-space: nowrap;
  font-size: 7.4px;
`;

const NoneLabel = styled.span`
  padding-left: 14px;
  grid-column: 2;
  font-size: 8px;
`;

const StrokeChip = styled.span`
  height: 11px;
  background: #c4c4c4;
`;

const StrokeWidth = styled.span`
  padding-left: 3px;
  font-size: 8.5px;
`;

const StatusHint = styled.span`
  margin-left: 6px;
  font-size: 9px;
  color: #555;
  white-space: nowrap;
  letter-spacing: 0.1px;
`;

const StatusKind = styled.b`
  color: #444;
  font-size: 9px;
  margin-right: 8px;
`;

const Coords = styled.div`
  position: absolute;
  left: 912px;
  top: 1px;
  height: 20px;
  width: 47px;
  border-left: 1px solid #c4c4c4;
  padding-left: 2px;
  font-size: 8.5px;
  line-height: 10px;
  color: #777;
  letter-spacing: 0.2px;
`;

const ZoomBox = styled.div`
  position: absolute;
  left: 959px;
  top: 2px;
  display: flex;
  align-items: center;
  gap: 2px;
`;

const ResizeGrip = styled.svg`
  position: absolute;
  right: 0;
  bottom: 0;
  width: 9px;
  height: 9px;
`;

const DarkStrip = styled.div`
  flex: 1;
  display: flex;
`;

const DarkPart = styled.div<{ $c: string; $w?: number }>`
  background: ${(p) => p.$c};
  width: ${(p) => (p.$w ? `${p.$w}px` : "auto")};
  flex: ${(p) => (p.$w ? "none" : "1")};
`;

/* red annotations over the shot */
const RedBox = styled.div<{ $x: number; $y: number; $w: number; $h: number }>`
  position: absolute;
  left: ${(p) => p.$x}px;
  top: ${(p) => p.$y}px;
  width: ${(p) => p.$w}px;
  height: ${(p) => p.$h}px;
  border: 5px solid #f20000;
`;

/* ---------- data ---------- */
const menus = [
  "ファイル(F)",
  "編集(E)",
  "表示(V)",
  "レイヤー(L)",
  "オブジェクト(O)",
  "パス(P)",
  "テキスト(T)",
  "フィルター(S)",
  "エクステンション(N)",
  "ヘルプ(H)",
];

const leftTools = [
  "selector", "node", "tweak", "zoom", "measure", "rect", "box3d", "ellipse", "star",
  "spiral", "pencil", "pen", "callig", "text", "spray", "eraser", "bucket",
];

const stripA = [
  "newDoc", "open", "save", "print", "-", "importDoc", "exportDoc", "-", "undo", "redo", "-",
  "copy", "cut", "paste", "-", "zoomA", "zoomB", "zoomC", "-", "dup", "cloneLock", "cloneGreen",
  "-", "chevronR",
];

const stripB: [string, boolean?][] = [
  ["snapMain", true], ["-"], ["snapMain"], ["snapBox1"], ["snapBox2"], ["snapBox3"], ["snapBox4"],
  ["-"], ["snapMain", true], ["curveA"], ["curveB"], ["curveC"], ["curveD"], ["curveE"], ["-"],
  ["snapMain", true], ["snapCenter"], ["snapPlus"], ["snapText"], ["-"], ["snapPage"],
  ["grid", true], ["guide", true],
];

const palette =
  "000000 1a1a1a 333333 4d4d4d 666666 808080 999999 b3b3b3 cccccc e6e6e6 ececec f2f2f2 f9f9f9 ffffff " +
  "800000 ff0000 808000 ffff00 008000 00ff00 008080 00ffff 000080 0000ff 800080 ff00ff " +
  "2b0000 550000 800000 aa0000 d40000 ff0000 ff2a2a ff5555 ff8080 ffaaaa ffd5d5 " +
  "280b0b 501616 782121 a02c2c c83737 d35f5f de8787 e9afaf f4d7d7 " +
  "241c1c 483737 6c5353 916f6f ac9393 c8b7b7 e3dbdb " +
  "2b1100 552200 803300 aa4400 d45500 ff6600 ff7f2a ff9955 ffb380 ffccaa ffe6d5 " +
  "28170b 502d16 784421 a05a2c c87137 d38d5f deaa87 e9c6af f4e3d7 " +
  "241f1c 483e37 6c5d53 917c6f ac9d93 c8beb7 e3dedb " +
  "2b2200 554400 806600 aa8800 d4aa00 ffcc00 ffd42a ffdd55 ffe680 ffeeaa fff6d5 " +
  "28220b 504416 786721 a0892c c8ab37 d3bc5f decd87 e9ddaf f4eed7 " +
  "24221c 484537 6c6753";

const handles = [
  { x: 201, y: 278, r: -45 },
  { x: 255, y: 278, r: 0 },
  { x: 308, y: 278, r: 45 },
  { x: 201, y: 325, r: 90 },
  { x: 309, y: 325, r: 90 },
  { x: 201, y: 372, r: 45 },
  { x: 255, y: 372, r: 0 },
  { x: 308, y: 372, r: -45 },
];

/* ---------- pieces ---------- */
const HRuler = () => {
  const zero = 207;
  const step = 6.55;
  const ticks = [];
  for (let i = -31; i < 60; i++) {
    const x = zero + i * step;
    if (x < 0 || x > 595) continue;
    const major = i % 10 === 0;
    const mid = i % 5 === 0;
    ticks.push(
      <line key={i} x1={x} x2={x} y1={major ? 1 : mid ? 5 : 7} y2={9} stroke="#777" strokeWidth=".8" />,
    );
    if (major) {
      ticks.push(
        <text key={`t${i}`} x={x + 2} y={6} fontSize="6.5" fill="#777" fontFamily="DejaVu Sans">
          {i * 25}
        </text>,
      );
    }
  }
  return (
    <RulerSvg width="595" height="10">
      {ticks}
      <line x1="0" x2="595" y1="9.5" y2="9.5" stroke="#666" />
      <path d="M84 6h6l-3 3z" fill="#222" />
    </RulerSvg>
  );
};

const VRuler = () => {
  const zero = 367.5;
  const step = 6.55;
  const ticks = [];
  for (let i = -10; i < 60; i++) {
    const y = zero - i * step;
    if (y < 0 || y > 426) continue;
    const major = i % 10 === 0;
    const mid = i % 5 === 0;
    ticks.push(
      <line key={i} y1={y} y2={y} x1={major ? 0 : mid ? 6 : 8} x2={11} stroke="#777" strokeWidth=".8" />,
    );
    if (major) {
      String(i * 25)
        .split("")
        .forEach((d, k) => {
          ticks.push(
            <text key={`t${i}${k}`} x={1.5} y={y + 7 + k * 7} fontSize="6.5" fill="#777" fontFamily="DejaVu Sans">
              {d}
            </text>,
          );
        });
    }
  }
  return (
    <RulerSvg width="11" height="426">
      {ticks}
      <line x1="10.5" x2="10.5" y1="0" y2="426" stroke="#666" />
      <path d="M7 1v6l3-3z" fill="#222" />
    </RulerSvg>
  );
};

const JoinIcon = ({ d }: { d: string }) => (
  <Ico $s={21} viewBox="0 0 21 21">
    <path d={d} fill="#8fb0d8" stroke="#2a3442" strokeWidth="1.2" />
    <path d="M11 4v7h8" stroke="#fff" strokeDasharray="1 1.5" fill="none" />
  </Ico>
);

const CapIcon = ({ d }: { d: string }) => (
  <Ico $s={21} viewBox="0 0 21 21">
    <path d={d} fill="#8fb0d8" stroke="#2a3442" strokeWidth="1.4" />
    <path d="M10.5 6v13" stroke="#fff" strokeDasharray="1 1.5" />
  </Ico>
);

const App = () => {
  return (
    <>
      <GlobalStyle />
      <Root>
        <MacBar>
          <Ico $s={11} viewBox="0 0 16 16">
            <path
              d="M11.5 8.5c0-2 1.6-2.8 1.7-2.9-1-1.4-2.4-1.6-2.9-1.6-1.2-.1-2.4.7-3 .7s-1.6-.7-2.6-.7C3.3 4 2 4.8 1.4 6c-1.3 2.2-.3 5.5 1 7.3.6.9 1.4 1.9 2.3 1.9s1.3-.6 2.5-.6 1.5.6 2.5.6 1.7-.9 2.3-1.8c.7-1 1-2 1-2.1-.1 0-2.5-.9-2.5-2.8zM9.6 2.8c.5-.6.9-1.5.8-2.4-.8 0-1.7.5-2.3 1.2-.5.6-.9 1.5-.8 2.3.9.1 1.8-.4 2.3-1.1z"
              fill="#2c3238"
            />
          </Ico>
          <MacItem $bold $ml={15}>XQuartz</MacItem>
          <MacItem $ml={14}>アプリケーション</MacItem>
          <MacItem $ml={15}>編集</MacItem>
          <MacItem $ml={15}>ウインドウ</MacItem>
          <MacItem $ml={15}>ヘルプ</MacItem>
          <MacRight>
            <Ico $s={12} viewBox="0 0 16 16">
              <path d="M4 2l4 3-4 3-4-3zM12 2l4 3-4 3-4-3zM4 8l4 3 4-3 0 0 4 0-8 6-8-6z" fill="#8a929c" />
            </Ico>
            <MacItem $ml={8}>
              <Ico $s={12} viewBox="0 0 16 16">
                <circle cx="8" cy="8" r="7.5" fill="#5d6670" />
                <path d="M4 10c3 1 6-1 7-6 2 3 1 8-3 9-2 0-3-1-4-3z" fill="#dfe8f2" />
              </Ico>
            </MacItem>
            <MacItem $ml={8}>
              <Ico $s={13} viewBox="0 0 16 16">
                <path d="M1 6c4-4 10-4 14 0M3.5 8.5c3-2.5 6-2.5 9 0M6 11c1.5-1 2.5-1 4 0" fill="none" stroke="#b5c0cc" strokeWidth="1.3" />
              </Ico>
            </MacItem>
            <MacItem $ml={9}>41%</MacItem>
            <MacItem $ml={3}>
              <Ico $s={17} viewBox="0 0 17 16">
                <rect x=".5" y="3.5" width="14" height="8" rx="1.5" fill="none" stroke="#333" />
                <rect x="2" y="5" width="5.5" height="5" fill="#333" />
                <rect x="15" y="6" width="1.5" height="3" fill="#333" />
              </Ico>
            </MacItem>
            <ImeBox>あ</ImeBox>
            <MacItem $ml={10}>月 14:08</MacItem>
            <MacItem $ml={14}>
              <Ico $s={13} viewBox="0 0 16 16">
                <circle cx="6.5" cy="6.5" r="5" fill="none" stroke="#333" strokeWidth="1.3" />
                <path d="M10 10l5 5" stroke="#333" strokeWidth="1.5" />
              </Ico>
            </MacItem>
            <MacItem $ml={10}>
              <Ico $s={14} viewBox="0 0 16 16">
                <path d="M4 3h12M4 8h12M4 13h12M0 3h2M0 8h2M0 13h2" stroke="#333" strokeWidth="1.5" />
              </Ico>
            </MacItem>
          </MacRight>
        </MacBar>

        <TitleBar>
          <Lights>
            <Light $c="#f2554c" />
            <Light $c="#f6b62e" />
            <Light $c="#35c648" />
          </Lights>
          <XBadge>X</XBadge>
          *新規ドキュメント 1 - Inkscape
        </TitleBar>

        <MenuRow>
          {menus.map((m) => (
            <span key={m}>{m}</span>
          ))}
        </MenuRow>

        <ToolRow>
          <TBtn><Icon n="newDocBlue" /></TBtn>
          <TBtn><Icon n="selAll" /></TBtn>
          <TBtn><Icon n="selTouch" /></TBtn>
          <VSep />
          <TBtn><Icon n="rotL" /></TBtn>
          <TBtn><Icon n="rotR" /></TBtn>
          <TBtn><Icon n="flipH" /></TBtn>
          <TBtn><Icon n="flipV" /></TBtn>
          <VSep />
          <TBtn><Icon n="top" /></TBtn>
          <TBtn><Icon n="raise" /></TBtn>
          <TBtn><Icon n="lower" /></TBtn>
          <TBtn><Icon n="bottom" /></TBtn>
          <VSep $mx={1} />
          <FieldLabel $w={11} $ml={12}>X:</FieldLabel>
          <SpinBox v="0.042" w={46} />
          <FieldLabel $w={12} $ml={6}>Y:</FieldLabel>
          <SpinBox v="0.042" w={45} />
          <FieldLabel $w={14} $ml={7}>幅:</FieldLabel>
          <SpinBox v="369.915" w={45} />
          <TBtn $w={20}><Icon n="lock" s={11} /></TBtn>
          <FieldLabel $w={21} $ml={8}>高さ:</FieldLabel>
          <SpinBox v="319.915" w={45} />
          <Select $w={32} $ml={2}>px<Chevron /></Select>
          <VSep $mx={4} />
          <SnapBtn $ml={2}><Icon n="strokeA" s={13} /></SnapBtn>
          <SnapBtn><Icon n="strokeB" s={13} /></SnapBtn>
          <SnapBtn><Icon n="strokeC" s={13} /></SnapBtn>
          <SnapBtn><Icon n="strokeD" s={13} /></SnapBtn>
        </ToolRow>

        <Main>
          <LeftTools>
            {leftTools.map((t, i) => (
              <LeftTool key={t} $active={i === 0}>
                <Icon n={t} s={19} />
              </LeftTool>
            ))}
            <LeftTool $mt={8}><Icon n="chevronR" s={10} /></LeftTool>
          </LeftTools>

          <CanvasGrid>
            <Corner />
            <HRuler />
            <ZoomCorner><Icon n="zoomPage" s={10} /></ZoomCorner>
            <VRuler />
            <Canvas>
              <Page />
              <Selected />
              {handles.map((h) => (
                <Handle key={`${h.x}-${h.y}`} $x={h.x} $y={h.y} $r={h.r} viewBox="0 0 12 12">
                  <path d="M6 0l4 4.2H8v3.6h2L6 12 2 7.8h2V4.2H2z" fill="#111" />
                </Handle>
              ))}
            </Canvas>
            <VScroll><VThumb /></VScroll>
            <HScroll />
            <HTrack><HThumb /></HTrack>
            <WheelBox><Icon n="wheel" s={11} /></WheelBox>
          </CanvasGrid>

          <Dock>
            <Grip />
            <DockInner>
              <DockTitle>
                <Icon n="fillStroke" s={13} />
                フィル/ストローク(F) (Shift+Ctrl+F)
                <DockTools>
                  <Icon n="panelLeft" s={9} />
                  <Icon n="panelClose" s={9} />
                </DockTools>
              </DockTitle>
              <Frame>
                <Tabs>
                  <Tab $w={62}>
                    <Ico $s={10} viewBox="0 0 10 10">
                      <rect width="10" height="10" fill="#a9c4e4" />
                    </Ico>
                    フィル(F)
                  </Tab>
                  <Tab $w={106}>
                    <Ico $s={10} viewBox="0 0 10 10">
                      <rect x=".5" y=".5" width="9" height="9" fill="#fff" stroke="#999" />
                    </Ico>
                    ストロークの塗り(P)
                  </Tab>
                  <Tab $w={127} $active>
                    <Icon n="strokeA" s={11} />
                    ストロークのスタイル(Y)
                  </Tab>
                </Tabs>
                <TabPage>
                  <FormRow $mt={0} $h={18}>
                    <FormLabel>幅(W):</FormLabel>
                    <Field $gap={4}>
                      <SpinBox v="10.000" w={66} fs={9.5} />
                      <Select $w={40}>px<Chevron /></Select>
                    </Field>
                  </FormRow>
                  <FormRow $mt={7} $h={24}>
                    <FormLabel>角:</FormLabel>
                    <Field>
                      <IconToggle><JoinIcon d="M2 19V2h17v9h-8v8z" /></IconToggle>
                      <IconToggle $on><JoinIcon d="M2 19V10Q2 2 11 2h8v9h-8v8z" /></IconToggle>
                      <IconToggle><JoinIcon d="M2 19V10L10 2h9v9h-8v8z" /></IconToggle>
                    </Field>
                  </FormRow>
                  <FormRow $mt={4} $h={20}>
                    <FormLabel>角結合の限界(L):</FormLabel>
                    <SpinBox v="4.00" w={53} h={20} off fs={9} />
                  </FormRow>
                  <FormRow $mt={5} $h={25}>
                    <FormLabel>端:</FormLabel>
                    <Field>
                      <IconToggle><CapIcon d="M4 20V10h13v10" /></IconToggle>
                      <IconToggle $on><CapIcon d="M4 20V9q0-6 6.5-6T17 9v11" /></IconToggle>
                      <IconToggle><CapIcon d="M4 20V4h13v16" /></IconToggle>
                    </Field>
                  </FormRow>
                  <FormRow $mt={4} $h={20}>
                    <FormLabel>線種:</FormLabel>
                    <Field $gap={2}>
                      <Select $w={79} $h={20}><LinePick $w={60} /><Chevron /></Select>
                      <SpinBox v="0.00" w={48} h={20} fs={9} />
                    </Field>
                  </FormRow>
                  <FormRow $mt={4} $h={22}>
                    <FormLabel>マーカー:</FormLabel>
                    <Field $gap={4}>
                      <Select $w={50} $h={22} $mr={5}><LinePick $w={11} /><Chevron /></Select>
                      <Select $w={54} $h={22}><LinePick $w={11} /><Chevron /></Select>
                      <Select $w={54} $h={22}><LinePick $w={11} /><Chevron /></Select>
                    </Field>
                  </FormRow>
                </TabPage>
                <ValueRow $mt={5} $h={20}>
                  <ValueBar>
                    <span>ぼかし (%)</span>
                    <ValueNum>0.0</ValueNum>
                  </ValueBar>
                  <SpinArrows>
                    <Chevron up small c="#aaa" />
                    <Chevron small c="#aaa" />
                  </SpinArrows>
                </ValueRow>
                <ValueRow $mt={5} $h={20}>
                  <ValueBar $full>
                    <span>不透明度 (%)</span>
                    <ValueNum>100.0</ValueNum>
                  </ValueBar>
                  <SpinArrows>
                    <Chevron up small c="#bbb" />
                    <Chevron small c="#555" />
                  </SpinArrows>
                </ValueRow>
              </Frame>
              <Expanders>
                <Expander>
                  <Icon n="exportDoc" s={13} />
                  PNG 画像にエクスポート(E) (Shift+Ctrl+E)
                  <Chevron up c="#888" />
                </Expander>
                <Expander $active>
                  <Icon n="fillStroke" s={13} />
                  フィル/ストローク(F) (Shift+Ctrl+F)
                  <Chevron up c="#888" />
                </Expander>
                <Expander>
                  <Icon n="layers" s={13} />
                  レイヤー(S) (Shift+Ctrl+L)
                  <Chevron up c="#888" />
                </Expander>
                <Expander>
                  <Icon n="objProps" s={13} />
                  オブジェクトのプロパティ(O) (Shift+Ctrl+O)
                  <Chevron up c="#888" />
                </Expander>
              </Expanders>
              <Dots />
            </DockInner>
          </Dock>

          <Strips>
            <Strip $w={25}>
              {stripA.map((n, i) =>
                n === "-" ? (
                  <StripSep key={i} />
                ) : (
                  <StripBtn key={i} $mt={n === "chevronR" ? 5 : 0}>
                    <Icon n={n} s={n === "chevronR" ? 11 : 15} />
                  </StripBtn>
                ),
              )}
            </Strip>
            <Strip $w={29}>
              {stripB.map(([n, on], i) =>
                n === "-" ? (
                  <StripSep key={i} />
                ) : (
                  <StripBtn key={i} $on={on}>
                    <Icon n={n} s={15} />
                  </StripBtn>
                ),
              )}
            </Strip>
          </Strips>
        </Main>

        <PaletteRow>
          <NoPaint viewBox="0 0 10 10">
            <path d="M0 0l10 10M10 0L0 10" stroke="#a33" strokeWidth="1.3" />
            <rect x=".5" y=".5" width="9" height="9" fill="none" stroke="#555" strokeWidth=".6" />
          </NoPaint>
          {palette.split(" ").map((c, i) => (
            <Swatch key={i} style={{ background: `#${c}` }} />
          ))}
          <PaletteEnd>
            <svg width="6" height="9" viewBox="0 0 6 9">
              <path d="M5 1L1 4.5 5 8" fill="none" stroke="#666" strokeWidth="1.2" />
            </svg>
          </PaletteEnd>
        </PaletteRow>
        <PaletteScroll>
          <PaletteThumb />
        </PaletteScroll>

        <Status>
          <FillStroke>
            <span>フィル:</span>
            <NoneLabel>なし</NoneLabel>
            <span />
            <span>ストローク:</span>
            <StrokeChip />
            <StrokeWidth>10</StrokeWidth>
          </FillStroke>
          <FieldLabel $w={10}>O:</FieldLabel>
          <SpinBox v="0" w={35} fs={9} />
          <VSep $mx={1} />
          <TBtn $w={14}><Icon n="eye" s={11} /></TBtn>
          <TBtn $w={12}><Icon n="lock" s={10} /></TBtn>
          <Select $w={60} $h={20} $bold $ml={2}>•mark<Chevron /></Select>
          <StatusHint>
            <StatusKind>矩形</StatusKind>
            所属: レイヤー mark. 選択オブジェクトのクリックで拡大縮小ハンドル/回転ハンドルを切り替えます.
          </StatusHint>
          <Coords>
            X: -357.14
            <br />
            Y: 1382.86
          </Coords>
          <ZoomBox>
            <FieldLabel $w={7}>Z:</FieldLabel>
            <SpinBox v="35%" w={42} fs={9} />
          </ZoomBox>
          <ResizeGrip viewBox="0 0 9 9">
            <path d="M9 1L1 9M9 4L4 9M9 7L7 9" stroke="#aaa" />
          </ResizeGrip>
        </Status>
        <DarkStrip>
          <DarkPart $c="#3a3d42" $w={630} />
          <DarkPart $c="#1b2c44" />
        </DarkStrip>

        <RedBox $x={258} $y={47} $w={333} $h={34} />
        <RedBox $x={746} $y={120} $w={155} $h={34} />
      </Root>
    </>
  );
};

export default App;
